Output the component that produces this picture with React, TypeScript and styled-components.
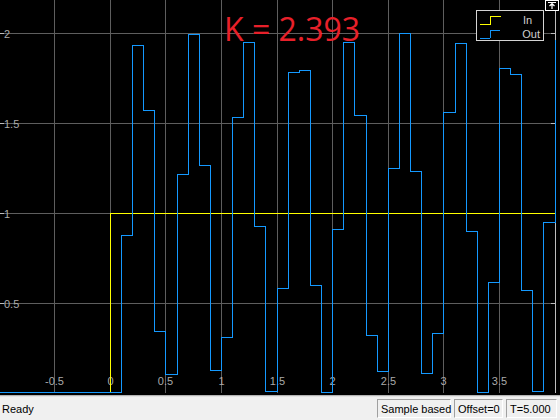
import * as React from 'react';
import styled, { createGlobalStyle } from 'styled-components';

const GlobalStyle = createGlobalStyle`
  html, body {
    margin: 0;
    padding: 0;
    background: #f0f0f0;
  }
  body {
    font-family: "Liberation Sans", Arial, sans-serif;
  }
`;

// sampled output of the loop, Ts = 0.1
const OUT = [
  0, 0.878, 1.933, 1.572, 0.339, 0.1, 1.217, 1.998, 1.267, 0.124,
  0.306, 1.533, 1.95, 0.928, 0.01, 0.583, 1.783, 1.794, 0.6, 0,
  0.911, 1.95, 1.544, 0.318, 0.118, 1.25, 2.0, 1.233, 0.106, 0.33,
  1.561, 1.944, 0.896, 0, 0.617, 1.806, 1.772, 0.568, 0.01, 0.946, 1.96,
];

const PLOT_W = 556;
const PLOT_H = 395;

const px = (t: number) => Math.floor(110.3 + 111.2 * t) + 0.5;
const py = (v: number) => Math.floor(392.8 - 179.5 * v) + 0.5;

const X_TICKS = [-0.5, 0, 0.5, 1, 1.5, 2, 2.5, 3, 3.5];
const Y_TICKS = [0.5, 1, 1.5, 2];

const Page = styled.div`
  width: 560px;
  height: 420px;
  display: flex;
  flex-direction: column;
  overflow: hidden;
`;

const Scope = styled.div`
  position: relative;
  height: ${PLOT_H}px;
  background: #000;
  flex: none;
`;

const Gain = styled.div`
  position: absolute;
  left: 224px;
  top: 13px;
  font-family: "Open Sans", "Noto Sans", sans-serif;
  font-size: 32px;
  line-height: 32px;
  color: #e8202a;
  white-space: nowrap;
`;

const Legend = styled.div`
  position: absolute;
  left: 476px;
  top: 10px;
  width: 68px;
  height: 31px;
  box-sizing: border-box;
  border: 1px solid #d4d4d4;
  background: #000;
  padding: 2px 3px;
  display: flex;
  flex-direction: column;
`;

const LegendRow = styled.div`
  display: flex;
  align-items: center;
  height: 14px;
`;

const LegendLabel = styled.span`
  margin-left: 22px;
  font-size: 11px;
  line-height: 14px;
  color: #cfcfcf;
`;

const UndockButton = styled.div`
  position: absolute;
  right: 1px;
  top: 0;
  width: 14px;
  height: 11px;
  display: flex;
`;

const StatusBar = styled.div`
  flex: 1;
  display: flex;
  align-items: center;
  gap: 3px;
  padding: 2px 3px 2px 2px;
  border-top: 1px solid #b4b4b4;
  box-shadow: inset 0 1px 0 #e2e2e2;
  background: #f0f0f0;
  font-size: 11px;
  color: #000;
`;

const StatusText = styled.span`
  flex: 1;
  padding-top: 1px;
`;

const StatusPane = styled.div<{ $w: number }>`
  width: ${(p) => p.$w}px;
  height: 19px;
  box-sizing: border-box;
  display: flex;
  align-items: center;
  padding-left: 3px;
  border: 1px solid;
  border-color: #a0a0a0 #ffffff #ffffff #a0a0a0;
  white-space: nowrap;
  margin-top: 1px;
`;

function StepIcon({ color }: { color: string }) {
  return (
    <svg width="21" height="14" viewBox="0 0 21 14">
      <path d="M0 11.5 H10.5 V3.5 H21" fill="none" stroke={color} strokeWidth="1" shapeRendering="crispEdges" />
    </svg>
  );
}

function ScopePlot() {
  let outPath = `M0 ${py(0)}`;
  OUT.forEach((v, k) => {
    outPath += ` H${px(k * 0.1)} V${py(v)}`;
  });
  outPath += ` H${PLOT_W + 10}`;

  const inPath = `M0 ${py(0)} H${px(0)} V${py(1)} H${PLOT_W}`;

  const label = { fill: '#ababab', fontSize: 11, fontFamily: '"Liberation Sans", Arial, sans-serif' };

  return (
    <svg width="560" height={PLOT_H} style={{ display: 'block' }}>
      <defs>
        <clipPath id="axes">
          <rect x="0" y="0" width={PLOT_W} height={PLOT_H - 1} />
        </clipPath>
      </defs>
      <g shapeRendering="crispEdges" stroke="#5e5e5e" strokeWidth="1">
        {X_TICKS.map((t) => (
          <line key={t} x1={px(t)} x2={px(t)} y1="0" y2={PLOT_H - 2} />
        ))}
        {Y_TICKS.map((v) => (
          <line key={v} x1="0" x2={PLOT_W} y1={py(v)} y2={py(v)} />
        ))}
      </g>
      <g shapeRendering="crispEdges" stroke="#bdbdbd" strokeWidth="1">
        <line x1="555.5" x2="555.5" y1="10" y2={PLOT_H - 2} />
        {Y_TICKS.map((v) => (
          <React.Fragment key={v}>
            <line x1="0" x2="4" y1={py(v)} y2={py(v)} />
            <line x1="551" x2="555" y1={py(v)} y2={py(v)} />
          </React.Fragment>
        ))}
      </g>
      {Y_TICKS.map((v) => (
        <text key={v} x="4" y={py(v) + 4.5} {...label}>
          {v}
        </text>
      ))}
      {X_TICKS.map((t) => (
        <text key={t} x={px(t)} y="385" textAnchor="middle" {...label}>
          {t}
        </text>
      ))}
      <g clipPath="url(#axes)" fill="none" strokeWidth="1" shapeRendering="crispEdges">
        <path d={inPath} stroke="#ffff00" />
        <path d={outPath} stroke="#1499ff" />
      </g>
    </svg>
  );
}

export default function App() {
  return (
    <Page>
      <GlobalStyle />
      <Scope>
        <ScopePlot />
        <Gain>K = 2.393</Gain>
        <Legend>
          <LegendRow>
            <StepIcon color="#ffff00" />
            <LegendLabel>In</LegendLabel>
          </LegendRow>
          <LegendRow>
            <StepIcon color="#1499ff" />
            <LegendLabel>Out</LegendLabel>
          </LegendRow>
        </Legend>
        <UndockButton>
          <svg width="14" height="11" viewBox="0 0 14 11">
            <rect x="0.5" y="0.5" width="13" height="10" fill="#000" stroke="#fff" strokeWidth="1" />
            <path d="M3 2.5 H11 M7 3.5 V9 M4.5 6 L7 3.5 L9.5 6" fill="none" stroke="#fff" strokeWidth="1.2" />
          </svg>
        </UndockButton>
      </Scope>
      <StatusBar>
        <StatusText>Ready</StatusText>
        <StatusPane $w={74}>Sample based</StatusPane>
        <StatusPane $w={49}>Offset=0</StatusPane>
        <StatusPane $w={51}>T=5.000</StatusPane>
      </StatusBar>
    </Page>
  );
}
